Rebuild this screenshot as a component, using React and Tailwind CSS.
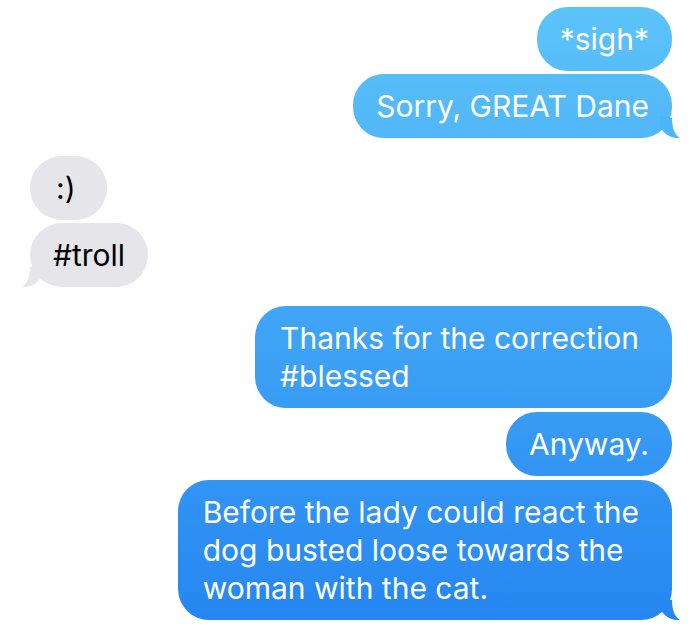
import React from "react";

const messages = [
  { from: "me", lines: ["*sigh*"], mt: "mt-[7px]" },
  { from: "me", lines: ["Sorry, GREAT Dane"], tail: true, mt: "mt-[3px]" },
  { from: "them", lines: [":)"], mt: "mt-[18px]", wide: true },
  { from: "them", lines: ["#troll"], tail: true, mt: "mt-[3px]" },
  { from: "me", lines: ["Thanks for the correction", "#blessed"], mt: "mt-[19px]" },
  { from: "me", lines: ["Anyway."], mt: "mt-[4px]" },
  {
    from: "me",
    lines: [
      "Before the lady could react the",
      "dog busted loose towards the",
      "woman with the cat.",
    ],
    tail: true,
    mt: "mt-[4px]",
  },
];

const Tail = ({ side, color }) => (
  <svg
    width="20"
    height="22"
    viewBox="0 0 20 22"
    className={
      side === "right"
        ? "absolute bottom-0 right-[-8px]"
        : "absolute bottom-0 left-[-8px] -scale-x-100"
    }
  >
    <path
      d="M12 2C12 12 15 19 20 22C15 22.5 10 21 6 18L0 12L0 0Z"
      fill={color}
    />
  </svg>
);

const Bubble = ({ msg }) => {
  const mine = msg.from === "me";
  const multi = msg.lines.length > 1;
  return (
    <div className={`flex ${mine ? "justify-end" : "justify-start"} ${msg.mt}`}>
      <div
        className={
          (mine
            ? "relative rounded-[31px] bg-fixed bg-gradient-to-b from-[#5dc4f9] to-[#2585f1] py-[13px] text-white"
            : "relative rounded-[32px] bg-[#e5e5ea] py-[13px] text-black") +
          (multi ? " pl-[25px] pr-[33px]" : " px-[23px]") +
          (msg.wide ? " min-w-[77px] pl-[26px]" : "")
        }
      >
        {msg.tail && (
          <Tail
            side={mine ? "right" : "left"}
            color={mine ? (multi ? "#2787f1" : "#4db6f7") : "#e5e5ea"}
          />
        )}
        <div className="relative whitespace-nowrap">
          {msg.lines.map((l, i) => (
            <div key={i}>{l}</div>
          ))}
        </div>
      </div>
    </div>
  );
};

const App = () => {
  return (
    <div className="w-[700px] h-[629px] overflow-hidden bg-white pl-[30px] pr-[28px] text-[30px] leading-[38px] font-['Inter',sans-serif] antialiased">
      {messages.map((m, i) => (
        <Bubble key={i} msg={m} />
      ))}
    </div>
  );
};

export default App;
